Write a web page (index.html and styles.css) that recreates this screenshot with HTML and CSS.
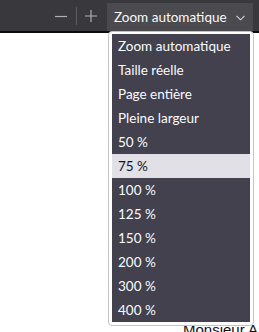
FILE: index.html
```html
<!DOCTYPE html>
<html lang="fr">
<head>
    <meta charset="UTF-8">
    <meta name="viewport" content="width=device-width, initial-scale=1.0">
    <title>Zoom</title>
    <link rel="stylesheet" href="styles.css">
</head>
<body>
    <div class="toolbar">
        <button class="tool-btn minus" title="Zoom arrière">
            <svg width="12" height="12" viewBox="0 0 12 12"><path d="M0 6.5h12" stroke="#b1b1b3" stroke-width="1.2"/></svg>
        </button>
        <span class="separator"></span>
        <button class="tool-btn plus" title="Zoom avant">
            <svg width="12" height="12" viewBox="0 0 12 12"><path d="M0 6h12M6 0v12" stroke="#b1b1b3" stroke-width="1.2"/></svg>
        </button>
        <div class="select">
            <span>Zoom automatique</span>
            <svg class="chevron" width="9" height="6" viewBox="0 0 9 6"><path d="M0.5 0.8l4 4 4-4" fill="none" stroke="#d7d7db" stroke-width="1.1"/></svg>
        </div>
    </div>

    <div class="page">
        <p class="letter">Monsieur A</p>
    </div>

    <div class="popup">
        <ul class="options">
            <li>Zoom automatique</li>
            <li>Taille réelle</li>
            <li>Page entière</li>
            <li>Pleine largeur</li>
            <li>50 %</li>
            <li class="selected">75 %</li>
            <li>100 %</li>
            <li>125 %</li>
            <li>150 %</li>
            <li>200 %</li>
            <li>300 %</li>
            <li>400 %</li>
        </ul>
    </div>
</body>
</html>
```

FILE: styles.css
```css
body {
    margin: 0;
    width: 259px;
    height: 332px;
    overflow: hidden;
    background: #fff;
    font-family: Lato, "Noto Sans", sans-serif;
    position: relative;
}
.toolbar {
    height: 31px;
    background: #38383d;
    border-bottom: 2px solid #0c0c0d;
    display: flex;
    align-items: center;
    padding-right: 6px;
    justify-content: flex-end;
}
.tool-btn {
    background: none;
    border: none;
    padding: 0;
    width: 12px;
    height: 12px;
    display: flex;
}
.minus {
    margin-top: 1px;
}
.separator {
    width: 1px;
    height: 18px;
    background: #5c5c61;
    margin: 0 8px 0 9px;
}
.select {
    align-self: flex-end;
    width: 146px;
    height: 28px;
    box-sizing: border-box;
    margin-left: 10px;
    padding: 0 8px 0 7px;
    background: #4a4a4f;
    color: #f9f9fa;
    font-size: 13.5px;
    display: flex;
    align-items: center;
    justify-content: space-between;
}
.chevron {
    margin-top: 1px;
}
.page {
    height: 299px;
}
.letter {
    margin: 0;
    padding: 288px 0 0 183px;
    font-family: "Liberation Sans", Arial, sans-serif;
    font-size: 15px;
    line-height: 18px;
    color: #111;
    white-space: nowrap;
}
.popup {
    position: absolute;
    left: 108px;
    top: 31px;
    width: 146px;
    height: 295px;
    box-sizing: border-box;
    padding: 2px 3px 2px 3px;
    background: #fff;
    border: 1px solid #c4c4c8;
    border-radius: 4px;
}
.options {
    list-style: none;
    margin: 0;
    padding: 0;
    background: #42414d;
}
.options li {
    height: 24px;
    line-height: 24px;
    padding-left: 6px;
    font-size: 13.5px;
    color: #fbfbfe;
}
.options li.selected {
    background: #e0e0e6;
    color: #15141a;
}
```
